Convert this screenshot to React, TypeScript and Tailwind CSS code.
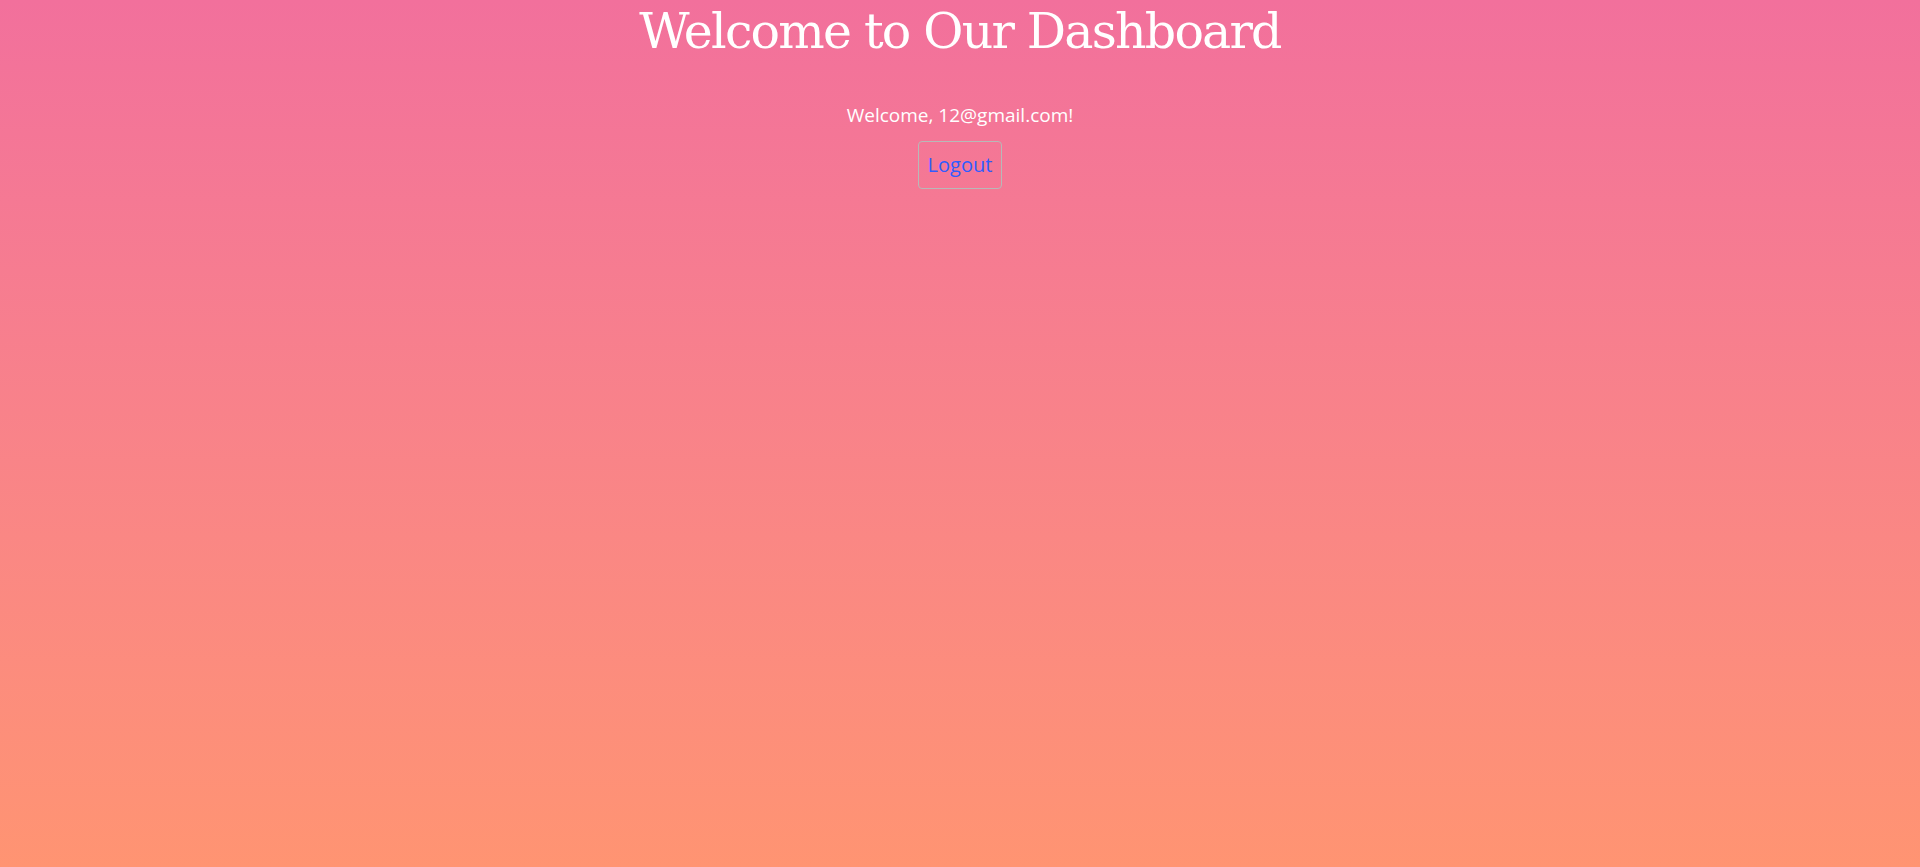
export default function App() {
  return (
    <div className="min-h-[867px] w-full bg-gradient-to-b from-[#f2709c] to-[#ff9472] flex flex-col items-center">
      <h1 className="pt-[2px] text-[49px] leading-[60px] text-white font-['DejaVu_Serif',serif] tracking-[-1.8px]">
        Welcome to Our Dashboard
      </h1>
      <p className="mt-[40px] text-[19px] leading-[26px] text-white font-['Open_Sans',sans-serif]">
        Welcome, 12@gmail.com!
      </p>
      <button className="mt-[13px] h-[48px] px-[9px] rounded-[4px] border border-[#b8b8b8] text-[20px] text-[#2f5cff] font-['Open_Sans',sans-serif]">
        Logout
      </button>
    </div>
  );
}
